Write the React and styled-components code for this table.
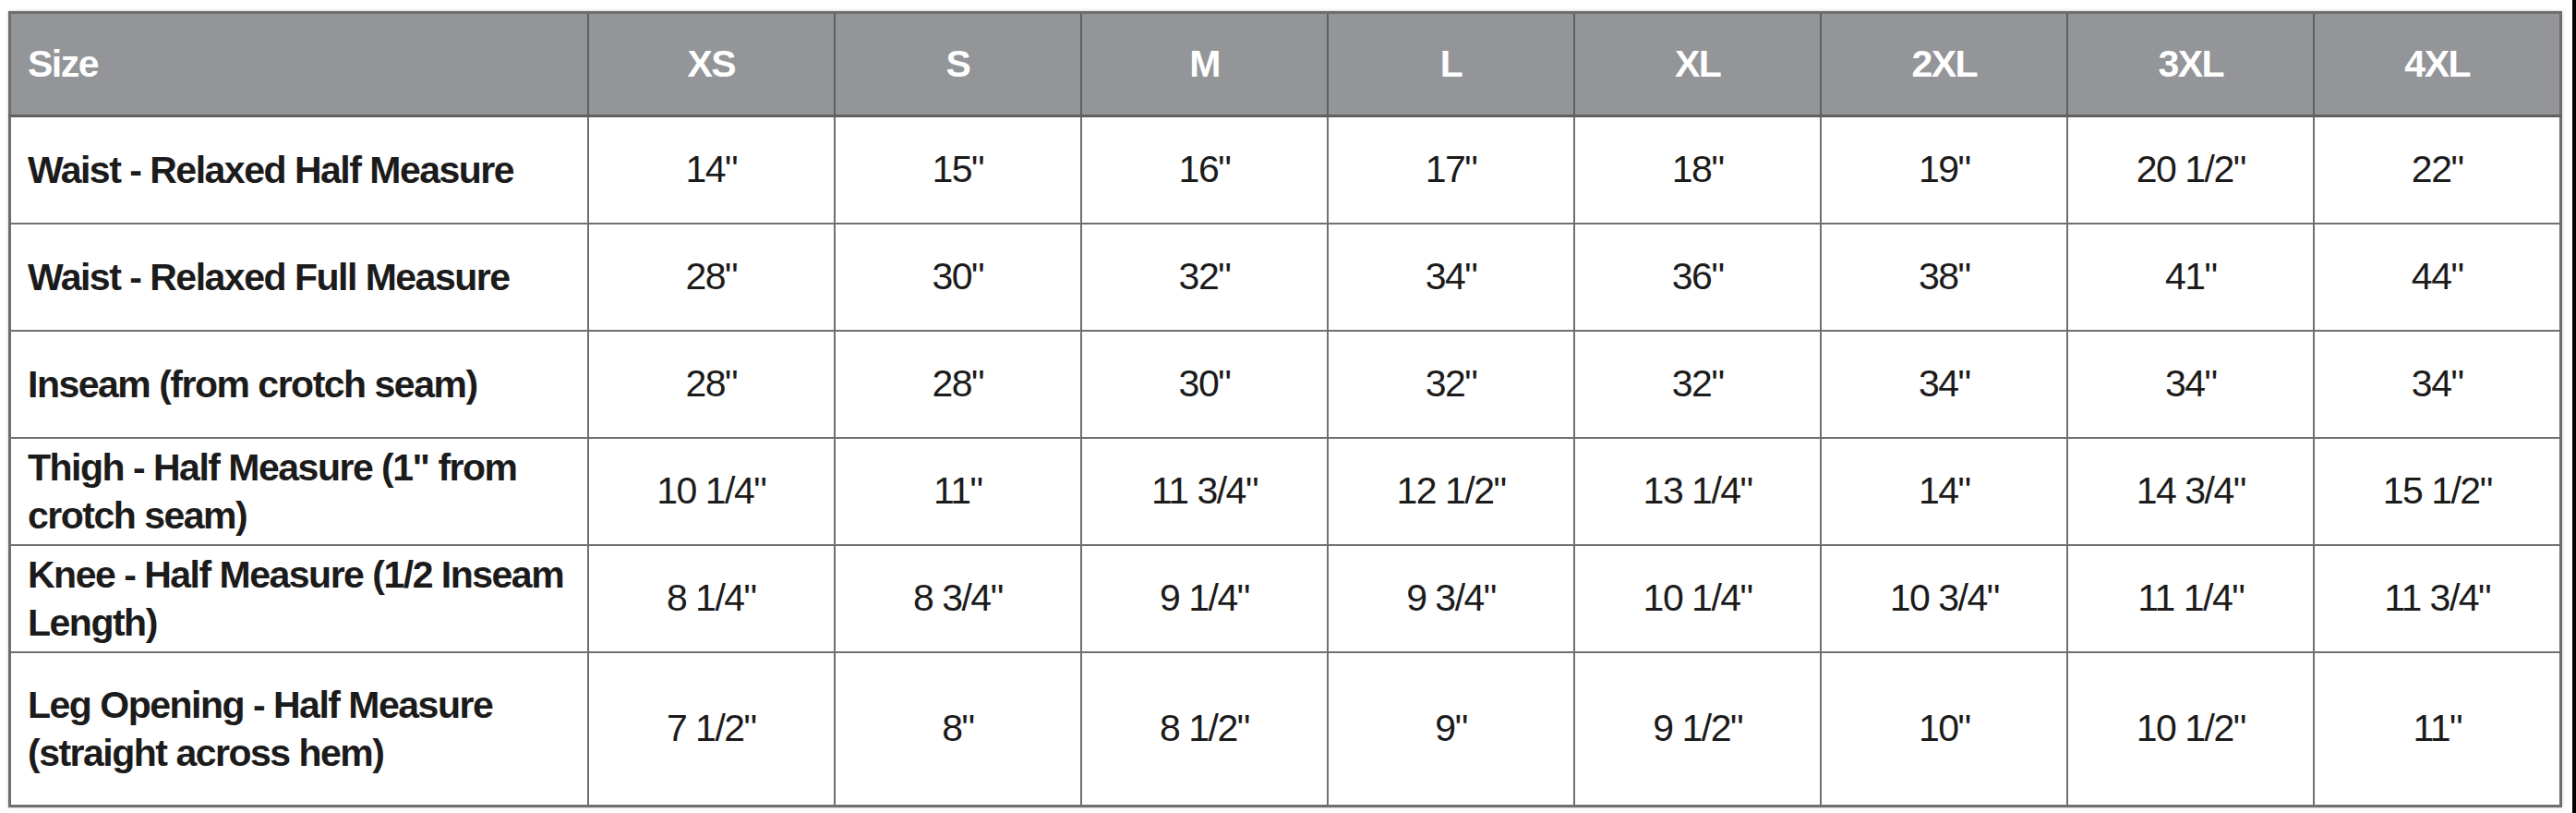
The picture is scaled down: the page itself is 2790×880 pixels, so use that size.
import React from "react";
import styled, { createGlobalStyle } from "styled-components";

const GlobalStyle = createGlobalStyle`
	html,
	body {
		margin: 0;
		padding: 0;
		background: #ffffff;
	}
`;

const sizes = ["XS", "S", "M", "L", "XL", "2XL", "3XL", "4XL"];

const rows = [
	{
		label: ["Waist - Relaxed Half Measure"],
		values: ['14"', '15"', '16"', '17"', '18"', '19"', '20 1/2"', '22"'],
	},
	{
		label: ["Waist - Relaxed Full Measure"],
		values: ['28"', '30"', '32"', '34"', '36"', '38"', '41"', '44"'],
	},
	{
		label: ["Inseam (from crotch seam)"],
		values: ['28"', '28"', '30"', '32"', '32"', '34"', '34"', '34"'],
	},
	{
		label: ['Thigh - Half Measure (1" from', "crotch seam)"],
		values: ['10 1/4"', '11"', '11 3/4"', '12 1/2"', '13 1/4"', '14"', '14 3/4"', '15 1/2"'],
	},
	{
		label: ["Knee - Half Measure (1/2 Inseam", "Length)"],
		values: ['8 1/4"', '8 3/4"', '9 1/4"', '9 3/4"', '10 1/4"', '10 3/4"', '11 1/4"', '11 3/4"'],
	},
	{
		label: ["Leg Opening - Half Measure", "(straight across hem)"],
		values: ['7 1/2"', '8"', '8 1/2"', '9"', '9 1/2"', '10"', '10 1/2"', '11"'],
		tall: true,
	},
];

function App() {
	return (
		<>
			<GlobalStyle />
			<Screen>
				<Chart>
					<colgroup>
						<col style={{ width: 626 }} />
						{sizes.map((s) => (
							<col key={s} style={{ width: 267 }} />
						))}
					</colgroup>
					<thead>
						<HeadRow>
							<HeadCell $align="left">Size</HeadCell>
							{sizes.map((s) => (
								<HeadCell key={s}>{s}</HeadCell>
							))}
						</HeadRow>
					</thead>
					<tbody>
						{rows.map((row) => (
							<BodyRow key={row.label.join(" ")} $tall={row.tall}>
								<LabelCell>
									{row.label.map((line, i) => (
										<Line key={i}>{line}</Line>
									))}
								</LabelCell>
								{row.values.map((v, i) => (
									<ValueCell key={i}>{v}</ValueCell>
								))}
							</BodyRow>
						))}
					</tbody>
				</Chart>
			</Screen>
		</>
	);
}

const Screen = styled.main`
	width: 2790px;
	height: 880px;
	box-sizing: border-box;
	padding: 12px 0 0 9px;
	border-right: 4px solid #000;
	background: #ffffff;
	display: flex;
	align-items: flex-start;
`;

const Chart = styled.table`
	width: 2766px;
	table-layout: fixed;
	border-collapse: collapse;
	border: 3px solid #6e6e6e;
	box-shadow: 0 0 4px rgba(0, 0, 0, 0.18);
	font-family: "Liberation Sans", Arial, sans-serif;
	font-size: 41px;
	letter-spacing: -1.5px;
	color: #1c1b1b;
`;

const HeadRow = styled.tr`
	height: 112px;
	background: #939598;
`;

const HeadCell = styled.th`
	padding: 0 18px;
	border: 2px solid #5f6062;
	border-bottom-width: 3px;
	text-align: ${(p) => p.$align || "center"};
	color: #ffffff;
	font-weight: 700;
`;

const BodyRow = styled.tr`
	height: ${(p) => (p.$tall ? "167px" : "116px")};
	background: #ffffff;
`;

const LabelCell = styled.td`
	padding: 0 18px;
	border: 2px solid #707070;
	font-weight: 700;
	line-height: 52px;
	text-align: left;
`;

const Line = styled.span`
	display: block;
	white-space: nowrap;
`;

const ValueCell = styled.td`
	padding: 0;
	border: 2px solid #707070;
	font-weight: 400;
	text-align: center;
`;

export default App;
